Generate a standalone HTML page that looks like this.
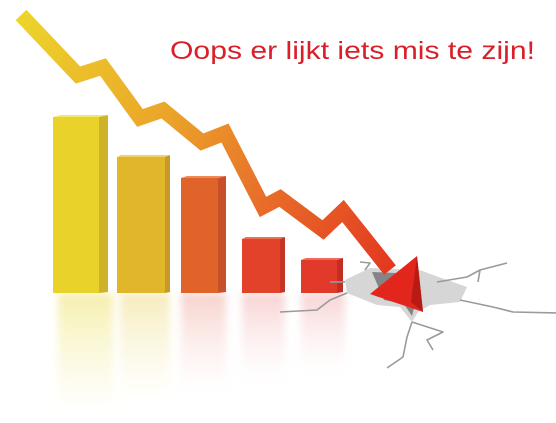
<!DOCTYPE html>
<html><head><meta charset="utf-8"><style>
html,body{margin:0;padding:0;background:#fff;}
svg{display:block;}
</style></head><body>
<svg width="556" height="423" viewBox="0 0 556 423" xmlns="http://www.w3.org/2000/svg">
<defs>
<linearGradient id="arr" x1="20" y1="15" x2="420" y2="310" gradientUnits="userSpaceOnUse">
<stop offset="0" stop-color="#ecd52a"/>
<stop offset="0.35" stop-color="#eba62a"/>
<stop offset="0.6" stop-color="#e8702a"/>
<stop offset="1" stop-color="#e2261c"/>
</linearGradient>
<linearGradient id="refY" x1="0" y1="0" x2="0" y2="1"><stop offset="0" stop-color="#eee26a" stop-opacity="0.55"/><stop offset="1" stop-color="#f4ee9a" stop-opacity="0"/></linearGradient>
<linearGradient id="refY2" x1="0" y1="0" x2="0" y2="1"><stop offset="0" stop-color="#eed77a" stop-opacity="0.5"/><stop offset="1" stop-color="#f4eeb0" stop-opacity="0"/></linearGradient>
<linearGradient id="refR" x1="0" y1="0" x2="0" y2="1"><stop offset="0" stop-color="#ec9a8a" stop-opacity="0.45"/><stop offset="1" stop-color="#f6d0cc" stop-opacity="0"/></linearGradient>
<linearGradient id="refR2" x1="0" y1="0" x2="0" y2="1"><stop offset="0" stop-color="#ee8f8f" stop-opacity="0.4"/><stop offset="1" stop-color="#f6d0d0" stop-opacity="0"/></linearGradient>
<filter id="bl"><feGaussianBlur stdDeviation="4"/></filter>
</defs>
<!-- reflections -->
<g filter="url(#bl)">
<rect x="58" y="293" width="55" height="120" fill="url(#refY)"/>
<rect x="120" y="293" width="50" height="110" fill="url(#refY2)"/>
<rect x="181" y="293" width="45" height="100" fill="url(#refR)"/>
<rect x="242" y="293" width="43" height="90" fill="url(#refR2)"/>
<rect x="301" y="293" width="44" height="80" fill="url(#refR2)"/>
</g>
<!-- bars -->
<rect x="53" y="117" width="46" height="176" fill="#e9d32a"/>
<polygon points="99,117 108,115 108,292 99,293" fill="#cdb22a"/>
<polygon points="53,117 99,117 108,115 61,115" fill="#f2e570"/>
<rect x="117" y="157" width="48" height="136" fill="#e2b62a"/>
<polygon points="165,157 170,155 170,292 165,293" fill="#c8992a"/>
<polygon points="117,157 165,157 170,155 121,155" fill="#efd06a"/>
<rect x="181" y="178" width="37" height="115" fill="#e0632a"/>
<polygon points="218,178 226,176 226,292 218,293" fill="#c8502a"/>
<polygon points="181,178 218,178 226,176 187,176" fill="#ec8a5a"/>
<rect x="242" y="239" width="38" height="54" fill="#e2422a"/>
<polygon points="280,239 285,237 285,292 280,293" fill="#c63524"/>
<polygon points="242,239 280,239 285,237 246,237" fill="#ee7050"/>
<rect x="301" y="260" width="36" height="33" fill="#e23a2a"/>
<polygon points="337,260 343,258 343,292 337,293" fill="#c42e22"/>
<polygon points="301,260 337,260 343,258 306,258" fill="#ee6a5a"/>
<!-- crack hole -->
<polygon points="345,280 370,268 420,270 433,275 467,287 460,302 430,305 418,312 412,322 400,307 377,305 347,293" fill="#d6d6d6"/>
<polygon points="372,272 418,274 416,300 412,316 404,304 384,300" fill="#6a6a6a" opacity="0.75"/>
<g fill="none" stroke="#9a9a9a" stroke-width="1.6" stroke-linejoin="round">
<polyline points="280,312 317,310 330,300 347,293"/>
<polyline points="412,322 443,332 427,340 433,350"/>
<polyline points="412,322 407,337 403,357 387,368"/>
<polyline points="460,300 493,307 513,312 557,313"/>
<polyline points="437,282 467,277 480,270 507,263"/>
<polyline points="480,270 478,282"/>
<polyline points="360,262 370,263 365,270"/>
<polyline points="330,282 345,282"/>
</g>
<!-- arrow -->
<polyline points="21,15 78,75 103,67 140,118 163,110 202,142 225,133 263,207 280,198 323,230 343,211 390,270" fill="none" stroke="url(#arr)" stroke-width="15" stroke-linejoin="miter" stroke-linecap="butt"/>
<polygon points="370,294 417,256 423,312" fill="#e2261c"/>
<polygon points="417,256 423,312 411,302" fill="#b81a14"/>
<!-- text -->
<text x="170" y="59" font-family="'Liberation Sans', sans-serif" font-size="25" fill="#d81f2a" textLength="365" lengthAdjust="spacingAndGlyphs">Oops er lijkt iets mis te zijn!</text>
</svg>
</body></html>
